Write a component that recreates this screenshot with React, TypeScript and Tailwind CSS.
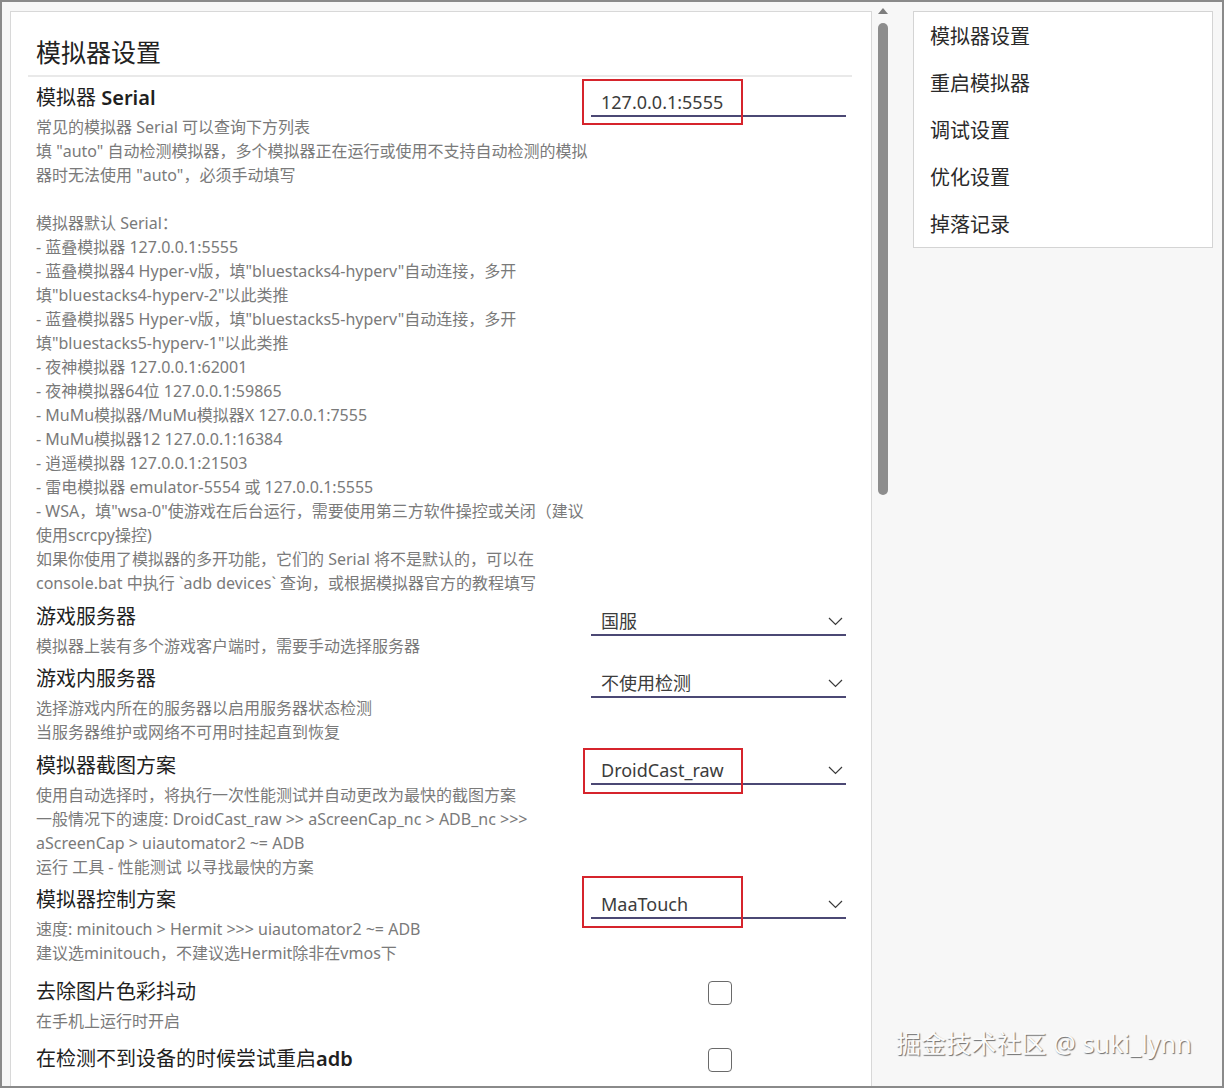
import type { ReactNode } from 'react';

const serialDesc = [
  '常见的模拟器 Serial 可以查询下方列表',
  '填 "auto" 自动检测模拟器，多个模拟器正在运行或使用不支持自动检测的模拟',
  '器时无法使用 "auto"，必须手动填写',
  '',
  '模拟器默认 Serial：',
  '- 蓝叠模拟器 127.0.0.1:5555',
  '- 蓝叠模拟器4 Hyper-v版，填"bluestacks4-hyperv"自动连接，多开',
  '填"bluestacks4-hyperv-2"以此类推',
  '- 蓝叠模拟器5 Hyper-v版，填"bluestacks5-hyperv"自动连接，多开',
  '填"bluestacks5-hyperv-1"以此类推',
  '- 夜神模拟器 127.0.0.1:62001',
  '- 夜神模拟器64位 127.0.0.1:59865',
  '- MuMu模拟器/MuMu模拟器X 127.0.0.1:7555',
  '- MuMu模拟器12 127.0.0.1:16384',
  '- 逍遥模拟器 127.0.0.1:21503',
  '- 雷电模拟器 emulator-5554 或 127.0.0.1:5555',
  '- WSA，填"wsa-0"使游戏在后台运行，需要使用第三方软件操控或关闭（建议',
  '使用scrcpy操控)',
  '如果你使用了模拟器的多开功能，它们的 Serial 将不是默认的，可以在',
  'console.bat 中执行 `adb devices` 查询，或根据模拟器官方的教程填写',
];

const navItems = ['模拟器设置', '重启模拟器', '调试设置', '优化设置', '掉落记录'];

function Row({
  title,
  desc,
  control,
  top,
}: {
  title: ReactNode;
  desc: string[];
  control: ReactNode;
  top: string;
}) {
  return (
    <div className={`grid grid-cols-[550px_255px] gap-x-[5px] pl-2 ${top}`}>
      <div>
        <div className="text-[20px] leading-[34px] text-[#1f1f1f]">{title}</div>
        {desc.map((line, i) => (
          <div key={i} className="h-[24px] text-[16px] leading-[24px] text-[#7a7a7a] whitespace-nowrap">
            {line}
          </div>
        ))}
      </div>
      <div className="relative">{control}</div>
    </div>
  );
}

// red annotation frame drawn over a control
function Mark({ pos }: { pos: string }) {
  return <div className={`absolute border-2 border-[#d6242c] pointer-events-none ${pos}`} />;
}

function Chevron() {
  return (
    <svg width="15" height="9" viewBox="0 0 15 9" fill="none" className="mr-[3px]">
      <polyline points="1,1 7.5,7.5 14,1" stroke="#3a3a3a" strokeWidth="1.2" />
    </svg>
  );
}

function Select({ value, mark }: { value: string; mark?: string }) {
  return (
    <div className="relative pt-[9px]">
      <div className="flex items-center justify-between pl-[10px] h-[27px] border-b-2 border-[#4b4874]">
        <span className="text-[18px] leading-[25px] text-[#3c3c3c]">{value}</span>
        <Chevron />
      </div>
      {mark && <Mark pos={mark} />}
    </div>
  );
}

function Checkbox() {
  return (
    <div className="pt-[6px] pl-[117px]">
      <div className="w-6 h-6 rounded-[4px] border-[1.5px] border-[#6a6a6a] bg-white" />
    </div>
  );
}

export default function App() {
  return (
    <div className="relative w-[1224px] h-[1088px] overflow-hidden border-2 border-[#8a8a8a] bg-[#f7f7f7] flex items-start font-['Noto_Sans','Noto_Sans_CJK_SC',sans-serif]">
      {/* settings card */}
      <div className="ml-2 mt-[9px] w-[862px] bg-white border border-[#d8d8d8] pl-[17px] pr-[19px] pt-[23px] pb-[60px]">
        <h1 className="pl-2 text-[25px] leading-[34px] text-[#222] mb-[6px]">模拟器设置</h1>
        <div className="h-[2px] bg-[#e9e9e9]" />

        <Row
          top="pt-[4px]"
          title={
            <>
              模拟器 <span className="font-semibold">Serial</span>
            </>
          }
          desc={serialDesc}
          control={
            <div className="relative pt-[9px]">
              <div className="pl-[10px] h-[27px] text-[18px] leading-[25px] text-[#3c3c3c] border-b-2 border-[#4b4874]">
                127.0.0.1:5555
              </div>
              <Mark pos="left-[-9px] top-[-2px] w-[161px] h-[46px]" />
            </div>
          }
        />
        <Row
          top="pt-[5px]"
          title="游戏服务器"
          desc={['模拟器上装有多个游戏客户端时，需要手动选择服务器']}
          control={<Select value="国服" />}
        />
        <Row
          top="pt-[4px]"
          title="游戏内服务器"
          desc={['选择游戏内所在的服务器以启用服务器状态检测', '当服务器维护或网络不可用时挂起直到恢复']}
          control={<Select value="不使用检测" />}
        />
        <Row
          top="pt-[5px]"
          title="模拟器截图方案"
          desc={[
            '使用自动选择时，将执行一次性能测试并自动更改为最快的截图方案',
            '一般情况下的速度: DroidCast_raw >> aScreenCap_nc > ADB_nc >>>',
            'aScreenCap > uiautomator2 ~= ADB',
            '运行 工具 - 性能测试 以寻找最快的方案',
          ]}
          control={<Select value="DroidCast_raw" mark="left-[-8px] top-[-1px] w-[160px] h-[46px]" />}
        />
        <Row
          top="pt-[4px]"
          title="模拟器控制方案"
          desc={['速度: minitouch > Hermit >>> uiautomator2 ~= ADB', '建议选minitouch，不建议选Hermit除非在vmos下']}
          control={<Select value="MaaTouch" mark="left-[-9px] top-[-7px] w-[161px] h-[52px]" />}
        />
        <Row top="pt-[10px]" title="去除图片色彩抖动" desc={['在手机上运行时开启']} control={<Checkbox />} />
        <Row
          top="pt-[9px]"
          title={
            <>
              在检测不到设备的时候尝试重启<span className="font-semibold">adb</span>
            </>
          }
          desc={['']}
          control={<Checkbox />}
        />
      </div>

      {/* scrollbar */}
      <div className="ml-[5px] mt-[6px] w-[11px] flex flex-col items-center">
        <svg width="10" height="6" viewBox="0 0 10 6">
          <polygon points="5,0 10,6 0,6" fill="#7d7d7d" />
        </svg>
        <div className="mt-[9px] w-[10px] h-[472px] rounded-full bg-[#8d8d8d]" />
      </div>

      {/* side nav */}
      <div className="ml-[25px] mt-[9px] w-[300px] h-[237px] overflow-hidden bg-white border border-[#d4d4d4] pl-4 pt-[1px]">
        {navItems.map((item) => (
          <div key={item} className="text-[20px] leading-[47px] text-[#2a2a2a]">
            {item}
          </div>
        ))}
      </div>

      {/* watermark */}
      <div className="absolute left-[894px] top-[1026px] text-[25px] leading-[30px] tracking-[0.1px] text-[#fbfbfb] [text-shadow:1px_1px_1px_#6f6f6f] whitespace-nowrap">
        掘金技术社区 @ suki_lynn
      </div>
    </div>
  );
}
